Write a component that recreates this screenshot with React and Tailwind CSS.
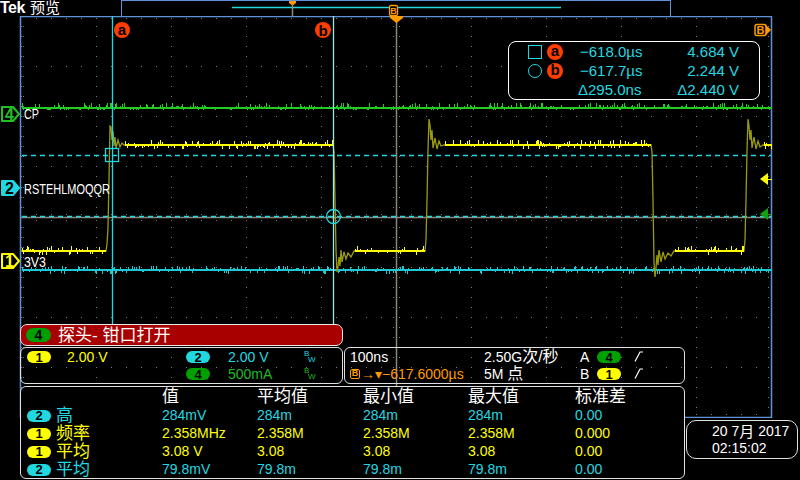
import React from 'react';

const CYAN = '#22d8e0';
const SANS = '"Liberation Sans", "Noto Sans CJK SC", sans-serif';

function rng(seed) {
  let s = seed;
  return () => {
    s = (s * 16807) % 2147483647;
    return (s - 1) / 2147483646;
  };
}

// noisy flat part of a trace, drawn as 1px columns
function noisy(x0, x1, base, seed, up = 4, down = 3) {
  const r = rng(seed);
  let d = '';
  for (let x = x0; x <= x1; x++) {
    const a = r();
    let top = base - 1;
    let bot = base + 1;
    if (a < 0.22) top -= Math.ceil(r() * up);
    else if (a < 0.36) bot += Math.ceil(r() * down);
    d += `M${x + 0.5} ${top}V${bot}`;
  }
  return d;
}

const yellowEdge = [
  [21, 251], [106, 251], [107, 244], [108, 228], [109, 180], [110, 126], [111, 127], [112, 140], [113, 131], [114, 146], [115, 137], [116, 148], [118, 140], [120, 147], [122, 143], [124, 145],
  [333, 145], [334, 152], [335, 200], [336, 250], [337, 272], [338, 267], [339, 257], [340, 266], [341, 250], [342, 262], [344, 252], [346, 259], [348, 253], [351, 257], [354, 251],
  [425, 251], [426, 240], [427, 200], [428, 150], [429, 119], [430, 125], [431, 140], [432, 130], [433, 148], [435, 138], [437, 149], [439, 141], [441, 146], [444, 145],
  [651, 145], [652, 152], [653, 200], [654, 262], [655, 277], [656, 268], [657, 255], [658, 265], [659, 250], [661, 262], [663, 252], [665, 259], [668, 253], [671, 256], [674, 251],
  [744, 251], [745, 240], [746, 200], [747, 150], [748, 119], [749, 126], [750, 140], [751, 130], [752, 148], [754, 137], [756, 149], [758, 141], [760, 147], [763, 145], [771, 145],
];

function gridPath() {
  let d = '';
  for (let i = 0; i <= 10; i++) {
    const x = 21 + 75 * i;
    for (let k = 1; k < 40; k++) {
      const y = Math.round(16 + 10.03 * k);
      d += `M${x} ${y + 0.5}h1`;
    }
  }
  for (let j = 1; j < 8; j++) {
    const y = Math.round(16 + 50.125 * j);
    for (let k = 1; k < 50; k++) {
      d += `M${21 + 15 * k} ${y + 0.5}h1`;
    }
  }
  // border ticks
  for (let k = 1; k < 50; k++) {
    d += `M${21 + 15 * k} 18.5h1M${21 + 15 * k} 414.5h1`;
  }
  for (let k = 1; k < 40; k++) {
    const y = Math.round(16 + 10.03 * k);
    d += `M23 ${y + 0.5}h1M768 ${y + 0.5}h1`;
  }
  // centre line ticks
  for (let k = 1; k < 40; k++) {
    const y = Math.round(16 + 10.03 * k);
    d += `M393 ${y + 0.5}h1M399 ${y + 0.5}h1`;
  }
  for (let k = 1; k < 50; k++) {
    d += `M${21 + 15 * k} 214.5h1M${21 + 15 * k} 220.5h1`;
  }
  return d;
}

const ChanMarker = ({ y, color, label, filled }) => (
  <g>
    <path
      d={`M2 ${y - 7} H13 L19 ${y} L13 ${y + 7} H2 Z`}
      fill={filled ? color : '#000'}
      stroke={color}
      strokeWidth="2"
      strokeLinejoin="round"
    />
    <text x="9.5" y={y + 5.5} textAnchor="middle" fontSize="16" fontWeight="bold" fill={filled ? '#000' : color} fontFamily={SANS}>
      {label}
    </text>
  </g>
);

const Scope = () => (
  <svg width="800" height="402" viewBox="0 16 800 402" className="block">
    <path d={gridPath()} stroke="#7a7a7a" strokeWidth="1" />
    <line x1="396.5" y1="16" x2="396.5" y2="418" stroke="#8f8878" strokeWidth="1.5" />
    <line x1="21" y1="217.5" x2="771" y2="217.5" stroke="#8f8878" strokeWidth="1.5" />
    <rect x="20.5" y="16.5" width="751" height="401" fill="none" stroke="#5f92d8" strokeWidth="1.5" />

    <line x1="22" y1="155.5" x2="771" y2="155.5" stroke={CYAN} strokeWidth="1.5" strokeDasharray="5 4" />
    <line x1="22" y1="216.5" x2="771" y2="216.5" stroke={CYAN} strokeWidth="1.5" strokeDasharray="5 4" />

    <path d={noisy(22, 771, 108, 7, 4, 1)} stroke="#22cc22" strokeWidth="1" />
    <path d={noisy(22, 771, 270, 11, 3, 3)} stroke="#1fc8d4" strokeWidth="1" />

    <polyline points={yellowEdge.map((p) => p.join(',')).join(' ')} fill="none" stroke="#9a9a10" strokeWidth="1.3" />
    <g stroke="#ffff00" strokeWidth="1">
      <path d={noisy(22, 105, 251, 3)} />
      <path d={noisy(125, 332, 145, 5)} />
      <path d={noisy(355, 424, 251, 9)} />
      <path d={noisy(445, 650, 145, 13)} />
      <path d={noisy(675, 743, 251, 17)} />
      <path d={noisy(764, 771, 145, 19)} />
    </g>

    <line x1="112.5" y1="16" x2="112.5" y2="330" stroke={CYAN} strokeWidth="1.3" />
    <line x1="333.5" y1="16" x2="333.5" y2="330" stroke="#9fe6ea" strokeWidth="1.3" />
    <rect x="105.5" y="148.5" width="13" height="13" fill="none" stroke={CYAN} strokeWidth="1.3" />
    <circle cx="333.5" cy="216.5" r="7" fill="none" stroke={CYAN} strokeWidth="1.3" />

    <circle cx="122" cy="30" r="8" fill="#ff3d00" />
    <text x="122" y="35" textAnchor="middle" fontSize="15" fontWeight="bold" fill="#000" fontFamily={SANS}>a</text>
    <circle cx="323" cy="30" r="8" fill="#ff3d00" />
    <text x="323" y="35.5" textAnchor="middle" fontSize="15" fontWeight="bold" fill="#000" fontFamily={SANS}>b</text>

    <path d="M390 16 H403 V18 L396.5 23 L390 18 Z" fill="#ff9a00" />
    <rect x="755" y="24.5" width="11" height="11" rx="2" fill="#000" stroke="#ff9a00" strokeWidth="1.5" />
    <text x="760.5" y="34" textAnchor="middle" fontSize="11" fontWeight="bold" fill="#ff9a00" fontFamily={SANS}>B</text>
    <path d="M766 25 L771 30 L766 35 Z" fill="#ff9a00" />

    <path d="M760 179 L768 173 V185 Z" fill="#ffff00" />
    <line x1="767" y1="179.5" x2="772" y2="179.5" stroke="#ffff00" />
    <path d="M760 214 L768 208 V220 Z" fill="#10a010" />
    <line x1="767" y1="214.5" x2="772" y2="214.5" stroke="#10a010" />

    <ChanMarker y={114} color="#22c022" label="4" />
    <ChanMarker y={188} color={CYAN} label="2" filled />
    <ChanMarker y={261} color="#ffff00" label="1" />

    <text x="24" y="119" fontSize="15" fill="#fff" fontFamily={SANS} textLength="15" lengthAdjust="spacingAndGlyphs">CP</text>
    <text x="24" y="194" fontSize="15" fill="#fff" fontFamily={SANS} textLength="86" lengthAdjust="spacingAndGlyphs">RSTEHLMOQQR</text>
    <text x="24" y="267" fontSize="15" fill="#fff" fontFamily={SANS} textLength="22" lengthAdjust="spacingAndGlyphs">3V3</text>
  </svg>
);

const Pill = ({ n, bg }) => (
  <span className={`inline-flex w-[24px] h-[12px] rounded-full items-center justify-center text-black font-bold text-[13px] leading-none ${bg}`}>
    {n}
  </span>
);

const Bw = ({ color }) => (
  <span className={`relative inline-block w-[12px] h-[14px] text-[8px] leading-none ${color}`}>
    <span className="absolute left-0 top-0">B</span>
    <span className="absolute left-[4px] top-[6px]">W</span>
  </span>
);

const Slope = () => (
  <svg width="10" height="11" viewBox="0 0 10 11">
    <path d="M1 10.5 L6 1 H9" stroke="#fff" fill="none" strokeWidth="1.2" />
  </svg>
);

const CursorBadge = ({ l }) => (
  <span className="inline-flex w-[16px] h-[16px] rounded-full bg-[#ff3d00] items-center justify-center text-black font-bold text-[15px] leading-none pb-[2px]">
    {l}
  </span>
);

const rows = [
  { n: '2', bg: 'bg-[#22d8e0]', color: 'text-[#22d8e0]', name: '高', v: ['284mV', '284m', '284m', '284m', '0.00'] },
  { n: '1', bg: 'bg-[#ffff00]', color: 'text-[#ffff00]', name: '频率', v: ['2.358MHz', '2.358M', '2.358M', '2.358M', '0.000'] },
  { n: '1', bg: 'bg-[#ffff00]', color: 'text-[#ffff00]', name: '平均', v: ['3.08 V', '3.08', '3.08', '3.08', '0.00'] },
  { n: '2', bg: 'bg-[#22d8e0]', color: 'text-[#22d8e0]', name: '平均', v: ['79.8mV', '79.8m', '79.8m', '79.8m', '0.00'] },
];

const colW = ['w-[95px]', 'w-[106px]', 'w-[105px]', 'w-[107px]', 'w-[90px]'];

export default function App() {
  return (
    <div className="relative w-[800px] h-[480px] bg-black overflow-hidden text-white font-['Liberation_Sans','Noto_Sans_CJK_SC',sans-serif]">
      {/* top bar */}
      <div className="flex h-[16px]">
        <div className="w-[121px] flex items-center">
          <span className="text-[16px] leading-[16px] font-bold tracking-[-0.5px]">Tek</span>
          <span className="text-[15px] leading-[16px] ml-[5px]">预览</span>
        </div>
        <div className="w-[550px] h-[16px] border border-b-0 border-[#5f92d8]">
          <svg width="548" height="15" viewBox="0 0 548 15" className="block">
            <line x1="110" y1="6.5" x2="439" y2="6.5" stroke={CYAN} strokeWidth="1.3" />
            <path d="M167 0 H174 V2 L171.5 4 H169.5 L167 2 Z" fill="#ff9a00" />
            <line x1="170.5" y1="3" x2="170.5" y2="15" stroke="#8f8878" strokeWidth="1.5" />
            <rect x="267.5" y="4.5" width="8" height="10" rx="1.5" fill="#000" stroke="#ff9a00" strokeWidth="1.3" />
            <text x="271.5" y="13" textAnchor="middle" fontSize="9" fontWeight="bold" fill="#ff9a00" fontFamily={SANS}>B</text>
          </svg>
        </div>
      </div>

      <Scope />

      {/* cursor readout */}
      <div className="absolute left-[508px] top-[41px] w-[252px] h-[59px] border border-white rounded-[8px] bg-black text-[#22d8e0] text-[15px] leading-none pl-[19px] pr-[20px]">
        <div className="flex items-center h-[19px]">
          <span className="w-[14px] h-[14px] border-[1.5px] border-[#22d8e0]" />
          <span className="ml-[5px]"><CursorBadge l="a" /></span>
          <span className="ml-[17px]">−618.0µs</span>
          <span className="flex-1 text-right">4.684 V</span>
        </div>
        <div className="flex items-center h-[19px]">
          <span className="w-[14px] h-[14px] rounded-full border-[1.5px] border-[#22d8e0]" />
          <span className="ml-[5px]"><CursorBadge l="b" /></span>
          <span className="ml-[17px]">−617.7µs</span>
          <span className="flex-1 text-right">2.244 V</span>
        </div>
        <div className="flex items-center h-[19px]">
          <span className="ml-[50px]">Δ295.0ns</span>
          <span className="flex-1 text-right">Δ2.440 V</span>
        </div>
      </div>

      {/* bottom panels */}
      <div className="absolute left-[20px] top-[324px] w-[778px] flex flex-col text-[14px] leading-none">
        <div className="flex items-end">
          <div className="w-[323px] flex flex-col gap-[1px]">
            <div className="h-[22px] bg-[#a80000] border border-[#e8e8e8] rounded-[7px] flex items-center pl-[5px]">
              <span className="inline-flex w-[25px] h-[14px] rounded-full bg-[#00a000] items-center justify-center text-black font-bold text-[14px]">4</span>
              <span className="ml-[7px] text-[17px]">探头- 钳口打开</span>
            </div>
            <div className="h-[37px] border border-[#e0e0e0] rounded-[6px] pl-[6px] flex flex-col">
              <div className="flex items-center h-[17px]">
                <span className="w-[40px]"><Pill n="1" bg="bg-[#ffff00]" /></span>
                <span className="w-[119px] text-[#ffff00]">2.00 V</span>
                <span className="w-[42px]"><Pill n="2" bg="bg-[#22d8e0]" /></span>
                <span className="w-[76px] text-[#22d8e0]">2.00 V</span>
                <Bw color="text-[#22d8e0]" />
              </div>
              <div className="flex items-center h-[17px]">
                <span className="w-[159px]" />
                <span className="w-[42px]"><Pill n="4" bg="bg-[#00a000]" /></span>
                <span className="w-[76px] text-[#22b822]">500mA</span>
                <Bw color="text-[#22b822]" />
              </div>
            </div>
          </div>
          <div className="ml-[1px] w-[341px] h-[37px] border border-[#e0e0e0] rounded-[6px] pl-[5px] flex flex-col">
            <div className="flex items-center h-[17px]">
              <span className="w-[134px]">100ns</span>
              <span className="w-[96px]">2.50G<span className="text-[16px]">次/秒</span></span>
              <span className="w-[17px]">A</span>
              <span className="w-[37px]"><Pill n="4" bg="bg-[#00a000]" /></span>
              <Slope />
            </div>
            <div className="flex items-center h-[17px]">
              <span className="w-[134px] flex items-center text-[#ff9a00]">
                <span className="inline-flex w-[10px] h-[10px] border-[1.5px] border-[#ff9a00] rounded-[2px] items-center justify-center text-[9px] font-bold">B</span>
                <span className="ml-[1px]">→▾−617.6000µs</span>
              </span>
              <span className="w-[96px]">5M <span className="text-[16px]">点</span></span>
              <span className="w-[17px]">B</span>
              <span className="w-[37px]"><Pill n="1" bg="bg-[#ffff00]" /></span>
              <Slope />
            </div>
          </div>
        </div>

        <div className="flex mt-[2px]">
          <div className="w-[665px] h-[93px] border border-[#e0e0e0] rounded-[6px] bg-black pl-[6px] flex flex-col">
            <div className="flex items-center h-[19px] text-[17px]">
              <span className="w-[135px]" />
              <span className="w-[95px]">值</span>
              <span className="w-[106px]">平均值</span>
              <span className="w-[105px]">最小值</span>
              <span className="w-[107px]">最大值</span>
              <span>标准差</span>
            </div>
            {rows.map((r, i) => (
              <div key={i} className={`flex items-center h-[18px] ${r.color}`}>
                <span className="w-[29px]"><Pill n={r.n} bg={r.bg} /></span>
                <span className="w-[106px] text-[17px]">{r.name}</span>
                {r.v.map((v, j) => (
                  <span key={j} className={colW[j]}>{v}</span>
                ))}
              </div>
            ))}
          </div>
          <div className="ml-[1px] mt-[34px] w-[112px] h-[39px] border border-[#e0e0e0] rounded-[10px] bg-black pl-[25px] flex flex-col justify-center">
            <div className="h-[17px] flex items-center">20 7<span className="text-[15px]">月</span>&nbsp;2017</div>
            <div className="h-[17px] flex items-center">02:15:02</div>
          </div>
        </div>
      </div>
    </div>
  );
}
